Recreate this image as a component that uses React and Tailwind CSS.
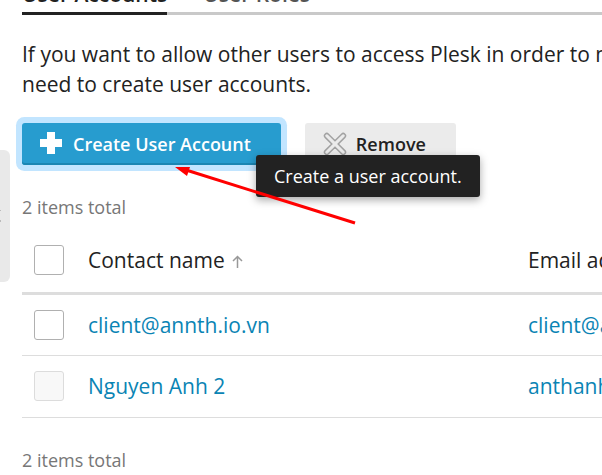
import React from "react";

const users = [
  { name: "client@annth.io.vn", email: "client@annth.io.vn", disabled: false },
  { name: "Nguyen Anh 2", email: "anthanh@annth.io.vn", disabled: true },
];

function Checkbox({ label, disabled }) {
  return (
    <input
      type="checkbox"
      aria-label={label}
      disabled={disabled}
      className="block size-[30px] appearance-none rounded-[3px] border border-[#b0b0b0] bg-white disabled:border-[#dcdcdc] disabled:bg-[#f8f8f8]"
    />
  );
}

function PlusIcon() {
  return (
    <svg width="24" height="24" viewBox="0 0 24 24" fill="#fff" aria-hidden="true">
      <path d="M8 0h8v7h7v8h-7v7H8v-7H1V7h7z" />
    </svg>
  );
}

function CrossIcon() {
  return (
    <svg width="24" height="24" viewBox="0 0 24 24" fill="none" aria-hidden="true">
      <path
        d="M5.4 2.200 12 8.800l6.600-6.600a2.260 2.260 0 0 1 3.200 3.200L15.200 12l6.600 6.600a2.260 2.260 0 0 1-3.200 3.200L12 15.200l-6.600 6.600a2.260 2.260 0 0 1-3.200-3.200L8.800 12 2.200 5.400a2.260 2.260 0 0 1 3.200-3.200z"
        stroke="#a2a2a2"
        strokeWidth="1.500"
      />
    </svg>
  );
}

export default function App() {
  return (
    <div className="relative min-h-screen overflow-hidden bg-white font-['Open_Sans','Noto_Sans',sans-serif] text-[21px] leading-[30px] text-[#222]">
      <button
        type="button"
        aria-label="Expand sidebar"
        className="absolute top-[150px] left-0 flex h-[132px] w-[10px] flex-col items-start justify-center rounded-r-[6px] bg-[#e9e9e9]"
      >
        <svg width="2" height="14" viewBox="0 0 2 14" fill="#bbb" aria-hidden="true">
          <path d="M0 1h1v1H0zM0 11h1v2H0z" />
        </svg>
      </button>

      <main className="pl-[22px]">
        <nav className="flex h-[15px] items-end gap-9 border-b-3 border-[#c9c9c9] font-semibold whitespace-nowrap">
          <a href="#accounts" aria-current="page" className="-mb-[3px] border-b-3 border-[#222] pb-[3px]">
            User Accounts
          </a>
          <a href="#roles" className="pb-[3px] text-[#555]">
            User Roles
          </a>
        </nav>

        <p className="mt-6 whitespace-nowrap">
          If you want to allow other users to access Plesk in order to manage websites, you
          <br />
          need to create user accounts.
        </p>

        <div className="mt-6 flex gap-6 text-[18px] font-semibold">
          <div className="relative">
            <button
              type="button"
              aria-describedby="create-tip"
              className="flex h-[42px] items-center gap-2.5 rounded-[3px] bg-[#279ccf] pr-[30px] pl-[17px] whitespace-nowrap text-white inset-shadow-[0_-2px_0_#1b86b3] ring-6 ring-[#c2e5ff]"
            >
              <PlusIcon />
              Create User Account
            </button>
            <div
              id="create-tip"
              role="tooltip"
              className="absolute top-8 left-[234px] z-10 rounded-[3px] bg-[#222] px-[18px] py-1.5 font-normal whitespace-nowrap text-white shadow-[0_3px_8px_rgba(0,0,0,0.35)]"
            >
              Create a user account.
            </div>
            <svg
              className="absolute top-[42px] left-[152px] z-20"
              width="184"
              height="62"
              viewBox="0 0 184 62"
              aria-hidden="true"
            >
              <path d="M12 5 181 58" stroke="#f00" strokeWidth="3" />
              <path d="M1 2l15 0-3 9z" fill="#f00" />
            </svg>
          </div>
          <button
            type="button"
            className="flex h-[42px] items-center gap-[9px] rounded-[3px] bg-[#ebebeb] pr-[30px] pl-[18px] whitespace-nowrap"
          >
            <CrossIcon />
            Remove
          </button>
        </div>

        <p className="mt-[27px] text-[18px] text-[#777]">2 items total</p>

        <table className="mt-[7px] w-full min-w-[760px] table-fixed border-collapse text-left whitespace-nowrap">
          <colgroup>
            <col className="w-[66px]" />
            <col className="w-[440px]" />
            <col />
          </colgroup>
          <thead>
            <tr className="h-16 border-b-3 border-[#ddd]">
              <th className="pl-3">
                <Checkbox label="Select all users" />
              </th>
              <th className="font-normal" aria-sort="ascending">
                <span className="flex items-center gap-[7px]">
                  Contact name
                  <svg
                    className="mt-1"
                    width="11"
                    height="14"
                    viewBox="0 0 11 14"
                    fill="none"
                    stroke="#999"
                    strokeWidth="1.500"
                    aria-hidden="true"
                  >
                    <path d="M5.500 13V2M1 6l4.500-4.500L10 6" />
                  </svg>
                </span>
              </th>
              <th className="font-normal">Email address</th>
            </tr>
          </thead>
          <tbody>
            {users.map((user) => (
              <tr key={user.name} className="h-[62px] border-b border-[#ddd]">
                <td className="pl-3">
                  <Checkbox label={`Select ${user.name}`} disabled={user.disabled} />
                </td>
                <td>
                  <a href="#user" className="text-[#0a84b4]">{user.name}</a>
                </td>
                <td>
                  <a href="#email" className="text-[#0a84b4]">{user.email}</a>
                </td>
              </tr>
            ))}
          </tbody>
        </table>

        <p className="mt-[27px] text-[18px] text-[#777]">2 items total</p>
      </main>
    </div>
  );
}
